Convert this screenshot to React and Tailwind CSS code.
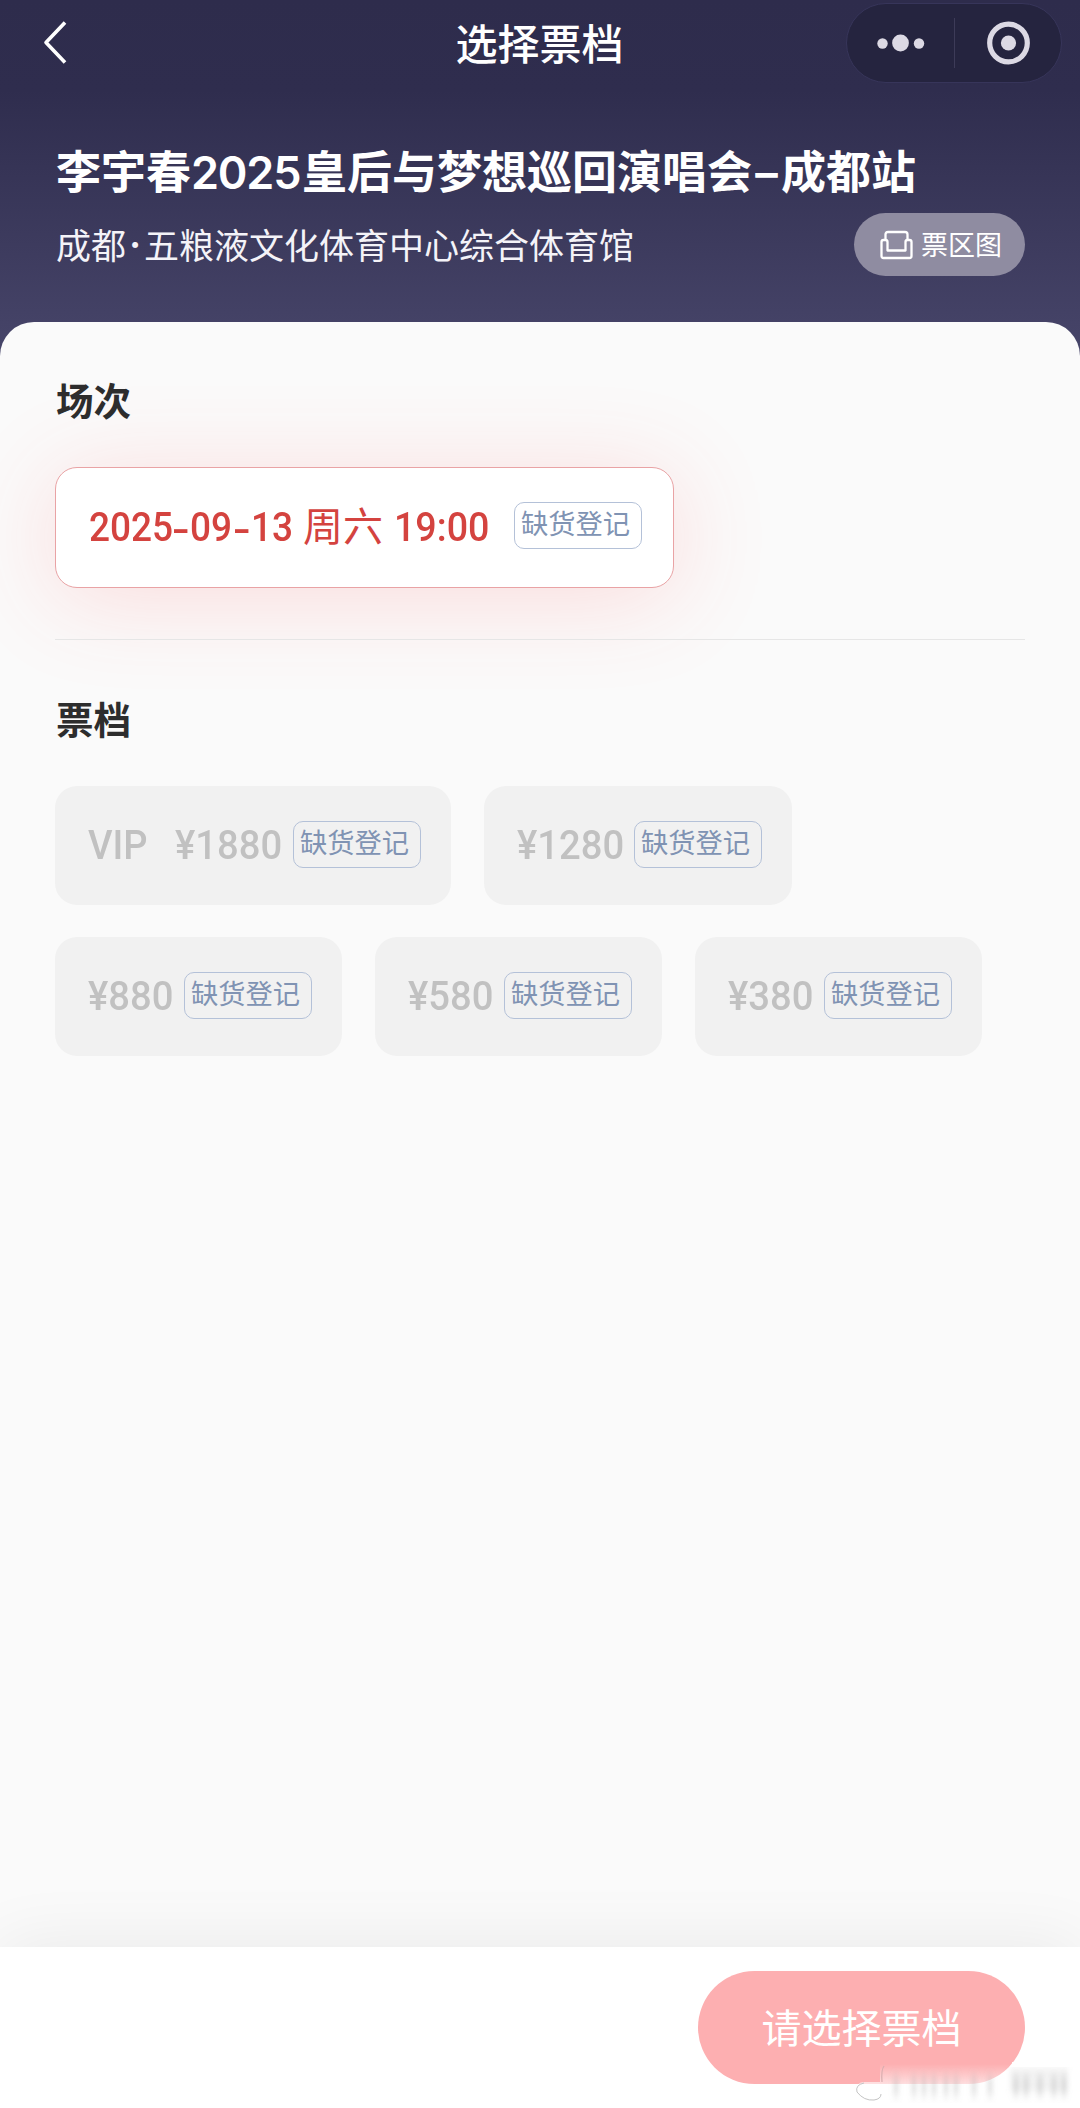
const CJK = 'font-["Noto_Sans_CJK_SC",sans-serif]';

function StockBadge({ className = "" }) {
  return (
    <span
      className={`flex h-[47px] w-[128px] shrink-0 justify-center rounded-[10px] border border-[#b4c1d8] pr-[5px] text-[27.3px] leading-[38px] text-[#8093b3] ${className}`}
    >
      缺货登记
    </span>
  );
}

/* Condensed numerals: a fixed box whose glyphs are narrowed from the left edge. */
function Digits({ children, width, className = "scale-x-[0.925]" }) {
  return (
    <span className="inline-block shrink-0 text-left whitespace-nowrap" style={{ width }}>
      <span
        className={`inline-block origin-left font-[Roboto,"Noto_Sans_CJK_SC",sans-serif] text-[40px] font-medium ${className}`}
      >
        {children}
      </span>
    </span>
  );
}

function Ticket({ label, price, priceWidth }) {
  return (
    <button className="flex h-[119px] items-start rounded-[22px] bg-[#f1f1f1] pr-[30px] pl-[33px] text-[#c1c1c1]">
      <span className="flex h-[119px] items-center">
        {label && <Digits width={87} className="scale-x-[0.95]">{label}</Digits>}
        <Digits width={priceWidth} className="scale-x-[0.955]">{price}</Digits>
      </span>
      <StockBadge className="mt-[35px]" />
    </button>
  );
}

function Header() {
  return (
    <header className="h-[358px] bg-[linear-gradient(180deg,#2e2c4c_0px,#2f2d4e_90px,#444266_322px,#474569_358px)] text-white">
      <div className="grid h-[86px] grid-cols-[1fr_auto_1fr] items-center pr-[18px] pl-[42px]">
        <svg width="30" height="46" viewBox="0 0 30 46" fill="none">
          <path d="M23 2.5 4 22.5 23 42.5" stroke="#fff" strokeWidth="3.6" strokeLinejoin="round" />
        </svg>
        <h1 className="-ml-[25px] pb-[2px] text-[42px] leading-[60px] font-medium">选择票档</h1>
        <div className="flex h-[80px] w-[216px] items-center justify-self-end rounded-full border border-[#37355a] bg-[#25243f]">
          <svg width="214" height="78" viewBox="0 0 214 78" fill="#dcd9e4">
            <circle cx="35.500" cy="39.5" r="5.2" />
            <circle cx="53.500" cy="39" r="8.4" />
            <circle cx="72" cy="39.5" r="5.2" />
            <rect x="107" y="14" width="1" height="50" fill="#3d3b58" />
            <circle cx="161.500" cy="39" r="18.8" fill="none" stroke="#dcd9e4" strokeWidth="5.2" />
            <circle cx="161.500" cy="39" r="7.6" />
          </svg>
        </div>
      </div>
      <div className="px-[55px] pt-[54px]">
        <h2 className='flex h-[66px] items-center pl-[1px] font-[Inter,"Noto_Sans_CJK_SC",sans-serif] text-[45px] font-bold whitespace-nowrap'>
          <span>李宇春</span>
          <span className="w-[111px] font-semibold tracking-[-1.2px]">2025</span>
          <span>皇后与梦想巡回演唱会</span>
          <span className="w-[29px] text-center font-semibold">–</span>
          <span>成都站</span>
        </h2>
        <div className="mt-[7px] flex h-[63px] items-center justify-between">
          <p className="flex pl-[1px] text-[35px] whitespace-nowrap text-[#f4f3f8]">
            <span>成都</span>
            <span className="w-[18px] text-center font-[Inter,sans-serif] font-bold">·</span>
            <span>五粮液文化体育中心综合体育馆</span>
          </p>
          <button className="flex h-[63px] w-[171px] items-center rounded-full bg-[#8f8ca1] pl-[26px] text-[27px] text-white">
            <svg width="33" height="30" viewBox="0 0 33 30" fill="none" stroke="#fff" strokeWidth="2.3" strokeLinejoin="round">
              <path d="M5.5 9.5V4.5Q5.500 2 8 2H25Q27.500 2 27.500 4.500V9.500" />
              <path d="M1.500 12Q1.500 10 3.500 10H5.500Q7.500 10 7.500 12V20.500H25.500V12Q25.500 10 27.500 10H29.500Q31.500 10 31.500 12V26Q31.500 28 29.500 28H3.500Q1.500 28 1.500 26Z" />
            </svg>
            <span className="ml-[8px]">票区图</span>
          </button>
        </div>
      </div>
    </header>
  );
}

/* Faint, smeared stamp in the lower right corner. */
function Stamp() {
  const bars = [46, 64, 74, 84, 96, 106, 124, 140, 166, 176, 190, 204, 214];
  return (
    <svg className="absolute right-0 bottom-0" width="230" height="52" viewBox="0 0 230 52" fill="none">
      <defs>
        <linearGradient id="fade" x1="0" y1="0" x2="0" y2="1">
          <stop offset="0" stopColor="#fff" stopOpacity="0" />
          <stop offset="0.8" stopColor="#fff" stopOpacity="0.85" />
        </linearGradient>
        <filter id="smear" x="-10%" y="-30%" width="120%" height="160%">
          <feGaussianBlur stdDeviation="2.6 5" />
        </filter>
      </defs>
      <rect x="30" y="8" width="132" height="36" fill="url(#fade)" />
      <path d="M162 6H200V40H162Z" fill="#fff" fillOpacity="0.9" />
      <g filter="url(#smear)" stroke="#999" strokeOpacity="0.34" strokeWidth="4">
        {bars.map((x) => (
          <path key={x} d={`M${x} 20V40`} />
        ))}
        <path d="M160 18H218M160 30H218" strokeWidth="8" strokeOpacity="0.2" />
      </g>
      <path d="M8 34Q6 26 14 26H30V40Q26 45 18 45Q10 44 8 34Z" fill="#fff" fillOpacity="0.6" />
      <path d="M14 27Q5 29 7 36Q14 45 24 44Q31 43 31 38" stroke="#c4c4c4" strokeWidth="1" />
      <path d="M34 10Q31 14 32 26" stroke="#d9aeb0" strokeWidth="1.2" />
    </svg>
  );
}

function Hyphen() {
  return (
    <Digits width={18}>
      <span className="inline-block origin-left translate-y-[3px] scale-x-140">-</span>
    </Digits>
  );
}

export default function App() {
  return (
    <div className={`flex h-[2108px] w-[1080px] flex-col overflow-hidden bg-[#fafafa] ${CJK}`}>
      <Header />
      <main className="relative -mt-[36px] flex-1 rounded-t-[34px] bg-[#fafafa] px-[55px] pt-[49px]">
        <h3 className="h-[56px] pl-[1px] text-[37.5px] leading-[56px] font-bold text-[#2d2d2d]">场次</h3>
        <div className="mt-[40px] flex h-[121px] w-[619px] items-start rounded-[22px] border border-[#e9a3a5] bg-white pl-[33px] text-[#d4433f] shadow-[0_10px_95px_rgba(255,70,70,0.17)]">
          <div className="flex h-[119px] w-[425px] items-center">
            <Digits width={83}>2025</Digits>
            <Hyphen />
            <Digits width={43}>09</Digits>
            <Hyphen />
            <Digits width={52}>13</Digits>
            <span className="w-[91px] pb-[7px] text-[40px]">周六</span>
            <Digits width={100} className="scale-x-[0.94]">19:00</Digits>
          </div>
          <StockBadge className="mt-[34px]" />
        </div>
        <hr className="mt-[51px] border-t border-[#e6e6e6]" />
        <h3 className="mt-[50px] h-[56px] pl-[1px] text-[37.5px] leading-[56px] font-bold text-[#2d2d2d]">票档</h3>
        <div className="mt-[40px] flex flex-wrap gap-x-[33px] gap-y-[32px]">
          <Ticket label="VIP" price="¥1880" priceWidth={118} />
          <Ticket price="¥1280" priceWidth={117} />
          <Ticket price="¥880" priceWidth={96} />
          <Ticket price="¥580" priceWidth={96} />
          <Ticket price="¥380" priceWidth={96} />
        </div>
      </main>
      <footer className="relative flex h-[161px] justify-end bg-white pt-[24px] pr-[55px] shadow-[0_0_70px_rgba(0,0,0,0.075)]">
        <button className="h-[113px] w-[327px] rounded-full bg-[#fdafb1] pb-[4px] text-[40px] text-white">请选择票档</button>
        <Stamp />
      </footer>
    </div>
  );
}
